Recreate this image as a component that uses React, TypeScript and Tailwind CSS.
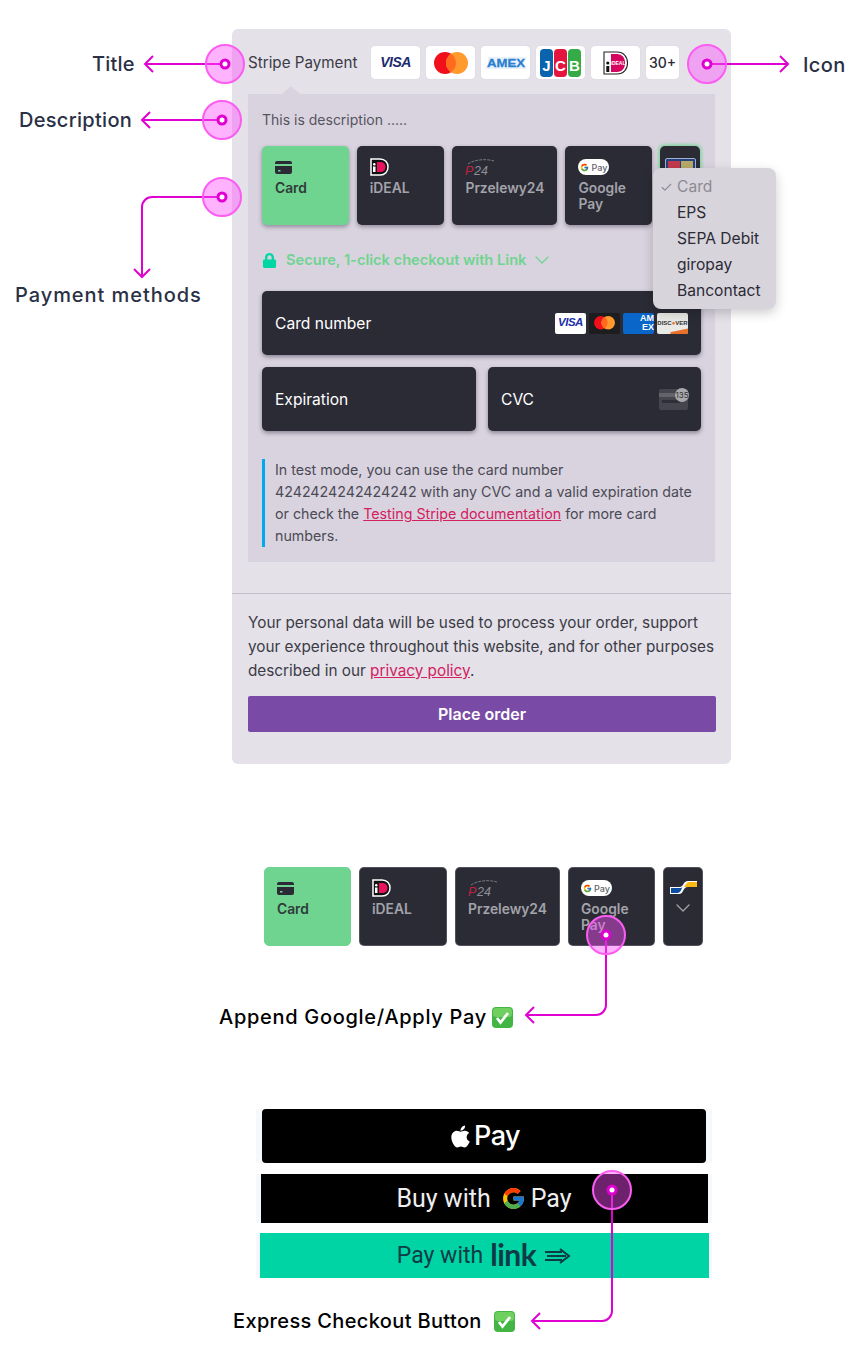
import React from "react"
import { Check, ChevronDown } from "lucide-react"
import { FaApple, FaLock } from "react-icons/fa"
import { FcGoogle } from "react-icons/fc"

const sans = "font-['Inter',sans-serif]"

function VisaMark({ size = "text-[14px]", color = "text-[#1a2b6d]" }: { size?: string; color?: string }) {
  return <span className={`font-['Liberation_Sans',sans-serif] font-bold italic tracking-[-0.5px] ${size} ${color}`}>VISA</span>
}

function McMark({ w = 34 }: { w?: number }) {
  return (
    <svg width={w} height={(w * 22) / 34} viewBox="0 0 34 22">
      <circle cx="11" cy="11" r="11" fill="#f00f1a" />
      <circle cx="23" cy="11" r="11" fill="#ff9a2e" />
      <path d="M17 1.800a11 11 0 0 1 0 18.400a11 11 0 0 1 0-18.400z" fill="#ff6a1f" />
    </svg>
  )
}

// tab version: white outline with the black body and the pink D
function IdealTabMark() {
  return (
    <svg width="19" height="18" viewBox="0 0 19 18">
      <path d="M1 1h9c5 0 8 3.500 8 8s-3 8-8 8H1z" fill="#111" stroke="#fff" strokeWidth="1.500" />
      <rect x="3" y="5" width="2.500" height="2.500" rx="1.200" fill="#fff" />
      <rect x="3" y="8.500" width="2.500" height="5.500" fill="#fff" />
      <path d="M7 4h3c3.500 0 5.500 2 5.500 5s-2 5-5.500 5H7z" fill="#e8125f" />
    </svg>
  )
}

function IdealBadgeMark() {
  return (
    <svg width="26" height="24" viewBox="0 0 26 24">
      <path d="M1 1h13c6.500 0 10.500 4.500 10.500 11S20.500 23 14 23H1z" fill="#fff" stroke="#222" strokeWidth="1.100" />
      <circle cx="4.800" cy="12" r="1.600" fill="#111" />
      <rect x="3.300" y="15" width="3" height="6" fill="#111" />
      <path d="M8 3h6c5 0 8 3.500 8 9s-3 9-8 9H8z" fill="#d5045f" />
      <text x="15" y="14" textAnchor="middle" fontSize="5" fontWeight="700" fontFamily="Liberation Sans, sans-serif" fill="#fff">iDEAL</text>
    </svg>
  )
}

function AmexMark() {
  return (
    <svg width="42" height="12" viewBox="0 0 42 12">
      <path d="M3 0h39l-3 6 3 6H0l3-6z" fill="#e9f2fb" />
      <text x="21" y="10" textAnchor="middle" fontSize="11" fontWeight="700" fontFamily="Liberation Sans, sans-serif" textLength="38" lengthAdjust="spacingAndGlyphs" fill="#2a7fd0" stroke="#2a7fd0" strokeWidth="0.300">AMEX</text>
    </svg>
  )
}

function Badge({ className = "w-[49px]", children }: { className?: string; children: React.ReactNode }) {
  return <div className={`flex h-[33px] items-center justify-center rounded-[4px] bg-white shadow-[0_0_1px_rgba(0,0,0,0.15)] ${className}`}>{children}</div>
}

function JcbMark() {
  return (
    <div className="flex h-[28px] w-[41px] gap-[1px] font-['Liberation_Sans',sans-serif]">
      <div className="flex w-[13px] items-end justify-center rounded-[4px] bg-[#0a63ad] pb-[4px] text-[15px] font-bold leading-none text-white">J</div>
      <div className="flex w-[13px] items-end justify-center rounded-[4px] bg-[#e4163f] pb-[4px] text-[15px] font-bold leading-none text-white">C</div>
      <div className="flex w-[13px] items-end justify-center rounded-[4px] bg-[#35ab48] pb-[4px] text-[15px] font-bold leading-none text-white">B</div>
    </div>
  )
}

function CardIcon() {
  return (
    <svg width="17" height="13" viewBox="0 0 17 13">
      <path d="M2 0h13a2 2 0 0 1 2 2v1H0V2a2 2 0 0 1 2-2z" fill="#2b2b36" />
      <path d="M0 5h17v6a2 2 0 0 1-2 2H2a2 2 0 0 1-2-2z" fill="#2b2b36" />
      <rect x="3" y="9" width="2.500" height="1.500" fill="#6fd490" />
    </svg>
  )
}

function P24Mark() {
  return (
    <svg width="30" height="19" viewBox="0 0 30 19">
      <path d="M3 6C9 1.500 21 .5 29 3" fill="none" stroke="#8a8a92" strokeWidth="0.800" strokeDasharray="3 1" />
      <text x="0" y="17" fontSize="12.500" fontStyle="italic" fontFamily="Liberation Sans, sans-serif" fill="#c0233c">P</text>
      <text x="9" y="17" fontSize="12.500" fontStyle="italic" fontFamily="Liberation Sans, sans-serif" fill="#8f8f96">24</text>
    </svg>
  )
}

function GPayChip() {
  return (
    <div className="flex h-[16px] w-[31px] items-center justify-center gap-[2px] rounded-full bg-white">
      <FcGoogle className="size-[9px]" />
      <span className="text-[9px] font-medium leading-none text-[#5f6368]">Pay</span>
    </div>
  )
}

function Tab({ className, active, flat, children, label }: { className: string; active?: boolean; flat?: boolean; children: React.ReactNode; label: React.ReactNode }) {
  const edge = flat
    ? `border px-[12px] pt-[12px] ${active ? "border-[#6fd490]" : "border-[#8d8d94]/40"}`
    : "px-[13px] pt-[13px] shadow-[0_2px_4px_rgba(40,30,60,0.4)]"
  return (
    <div className={`flex h-[79px] flex-col rounded-[5px] ${edge} ${active ? "bg-[#6fd490] text-[#2f3a3a]" : "bg-[#2b2b36] text-[#a3a3aa]"} ${className}`}>
      <div className="flex h-[16px] items-center">{children}</div>
      <div className="mt-[5px] text-[13.800px] font-semibold leading-[16px]">{label}</div>
    </div>
  )
}

function MethodTabs({ last, flat }: { last: React.ReactNode; flat?: boolean }) {
  return (
    <div className="flex gap-2">
      <Tab className="w-[87px]" flat={flat} active label="Card"><CardIcon /></Tab>
      <Tab className="w-[88px]" flat={flat} label="iDEAL"><IdealTabMark /></Tab>
      <Tab className="w-[105px]" flat={flat} label="Przelewy24"><P24Mark /></Tab>
      <Tab className="w-[87px]" flat={flat} label={<>Google<br />Pay</>}><GPayChip /></Tab>
      {last}
    </div>
  )
}

function Field({ className, label, children }: { className: string; label: string; children?: React.ReactNode }) {
  return (
    <div className={`flex h-[64px] items-center justify-between rounded-[5px] bg-[#2b2b36] pl-[13px] pr-[13px] text-[15.600px] text-white shadow-[0_2px_4px_rgba(40,30,60,0.45)] ${className}`}>
      <span className="pt-[1px]">{label}</span>
      {children}
    </div>
  )
}

function MiniCard({ className, children }: { className: string; children?: React.ReactNode }) {
  return <div className={`relative flex h-[21px] w-[31px] items-center justify-center overflow-hidden rounded-[2px] ${className}`}>{children}</div>
}

function CvcIcon() {
  return (
    <div className="relative h-[21px] w-[29px]">
      <div className="h-full w-full rounded-[2px] bg-[#45454f] pt-[4px]">
        <div className="h-[4px] bg-[#63636b]" />
        <div className="ml-[3px] mt-[3px] h-[3px] w-[18px] bg-[#2f2f39]" />
      </div>
      <div className="absolute -right-[1px] -top-[1px] flex size-[14px] items-center justify-center rounded-full bg-[#a9a9ad] text-[8px] leading-none text-[#333]">135</div>
    </div>
  )
}

function StripeCard() {
  return (
    <div className={`ml-[232px] mt-[29px] h-[735px] w-[499px] rounded-[6px] bg-[#e4e1e9] ${sans}`}>
      <div className="flex items-center pl-[16px] pt-[17px]">
        <span className="w-[123px] text-[15.200px] leading-[33px] text-[#3b3b45]">Stripe Payment</span>
        <div className="flex gap-[6px]">
          <Badge><VisaMark /></Badge>
          <Badge><McMark /></Badge>
          <Badge><AmexMark /></Badge>
          <Badge><JcbMark /></Badge>
          <Badge><IdealBadgeMark /></Badge>
          <Badge className="w-[33px]"><span className="text-[14px] font-medium text-[#2b2b36]">30+</span></Badge>
        </div>
      </div>
      <div className="relative mx-[16px] mt-[15px] h-[468px] bg-[#d9d3df] pl-[14px] pr-[15px] pt-[17px]">
        <div className="absolute -top-[8px] left-[34px] size-0 border-x-[9px] border-b-[8px] border-x-transparent border-b-[#d9d3df]" />
        <p className="text-[14px] leading-[18px] text-[#55535e]">This is description .....</p>
        <div className="mt-[17px]">
          <MethodTabs
            last={
              <div className="h-[79px] w-[40px] rounded-[5px] bg-[#2b2b36] pl-[5px] pt-[12px] shadow-[0_0_3px_2px_rgba(111,212,144,0.7)]">
                <div className="flex h-[18px] w-[31px] gap-[1px] rounded-[2px] border border-[#9fb0d0] bg-[#22417d] p-[2px]">
                  <div className="w-[13px] bg-[#c23a4d]" />
                  <div className="w-[13px] bg-[#b9a866]" />
                </div>
              </div>
            }
          />
        </div>
        <div className="mt-[25px] flex h-[20px] items-center text-[14.650px] font-semibold leading-[20px] text-[#6fd490]">
          <FaLock className="size-[15px] text-[#00d6a3]" />
          <span className="ml-[9px]">Secure, 1-click checkout with Link</span>
          <ChevronDown className="ml-[4px] size-[24px]" strokeWidth={1.300} />
        </div>
        <Field className="mt-[21px] w-[439px]" label="Card number">
          <div className="flex gap-[3px]">
            <MiniCard className="bg-white"><VisaMark size="text-[11.500px]" color="text-[#1c2fa8]" /></MiniCard>
            <MiniCard className="bg-[#1d1d20]"><McMark w={21} /></MiniCard>
            <MiniCard className="justify-end bg-[#0a66c8]">
              <span className="text-right font-['Liberation_Sans',sans-serif] text-[9px] font-bold leading-[9px] text-white">AM<br />EX</span>
            </MiniCard>
            <MiniCard className="bg-[#e9e9e6]">
              <span className="font-['Liberation_Sans',sans-serif] text-[6px] font-bold text-[#333]">DISC<span className="text-[#e8702a]">●</span>VER</span>
              <div className="absolute -bottom-[5px] -right-[3px] h-[9px] w-[20px] -rotate-[12deg] bg-[#e8702a]" />
            </MiniCard>
          </div>
        </Field>
        <div className="mt-[12px] flex w-[439px] gap-[12px]">
          <Field className="w-[214px]" label="Expiration" />
          <Field className="w-[213px]" label="CVC"><CvcIcon /></Field>
        </div>
        <div className="mt-[28px] w-[439px] border-l-[3px] border-[#00a8f0] pl-[10px] text-[14.250px] leading-[22px] text-[#4b4a55]">
          In test mode, you can use the card number 4242424242424242 with any CVC and a valid expiration date or check the{" "}
          <span className="text-[#d3205f] underline">Testing Stripe documentation</span> for more card numbers.
        </div>
      </div>
      <div className="mt-[31px] border-t border-[#c4c0ca] px-[16px] pt-[17px]">
        <p className="text-[15.300px] leading-[24px] text-[#3b3b45]">
          Your personal data will be used to process your order, support your experience throughout this website, and for other purposes described in our{" "}
          <span className="text-[#d3205f] underline">privacy policy</span>.
        </p>
        <button className={`mt-[13px] h-[36px] w-[468px] rounded-[2px] bg-[#7a4ba6] text-[16px] font-semibold text-white ${sans}`}>Place order</button>
      </div>
    </div>
  )
}

function MethodDropdown() {
  return (
    <div className={`absolute left-[653px] top-[168px] h-[141px] w-[123px] rounded-[8px] bg-[#d8d4db] py-[6px] pl-[24px] text-[15.600px] leading-[26px] text-[#2b2b36] shadow-[0_4px_12px_rgba(0,0,0,0.2)] ${sans}`}>
      <div className="relative text-[#8c8a94]">
        <Check className="absolute -left-[17px] top-[7px] size-[13px]" strokeWidth={2} />
        Card
      </div>
      <div>EPS</div>
      <div>SEPA Debit</div>
      <div>giropay</div>
      <div>Bancontact</div>
    </div>
  )
}

function AppendedTabs() {
  return (
    <div className={`ml-[264px] mt-[103px] ${sans}`}>
      <MethodTabs
        flat
        last={
          <div className="flex h-[79px] w-[40px] flex-col items-center rounded-[5px] border border-[#8d8d94]/40 bg-[#2b2b36] pt-[13px] text-[#a3a3aa]">
            <svg width="27" height="13" viewBox="0 0 27 13">
              <path d="M0 6h9c3 0 4-2 5-4 1-1 2-2 4-2h9v6h-9c-3 0-4 2-5 4-1 2-2 3-4 3H0z" fill="#fff" />
              <path d="M14 6c2-3 3-5 5-5h8v5z" fill="#fdb913" />
              <path d="M1 7h9c1 0 2-.5 2.500-1-1 2-2 6-5 6H1z" fill="#0b4ea2" />
            </svg>
            <ChevronDown className="mt-[2px] size-[24px]" strokeWidth={1.300} />
          </div>
        }
      />
    </div>
  )
}

function ExpressButtons() {
  return (
    <div className="ml-[256px] mt-[163px] flex w-[456px] flex-col font-['Roboto',sans-serif] text-white">
      <div className="flex justify-center bg-[#f6f9fc]">
        <div className="flex h-[54px] w-[444px] items-center justify-center gap-[1px] rounded-[4px] bg-black">
          <FaApple className="size-[25px]" />
          <span className="font-['Inter',sans-serif] text-[27px] font-medium tracking-[-0.5px]">Pay</span>
        </div>
      </div>
      <div className="mt-[11px] flex justify-center bg-[#f6f9fc]">
        <div className="flex h-[49px] w-[447px] items-center justify-center bg-black text-[25px] text-[#eee]">
          <span>Buy with</span>
          <FcGoogle className="ml-[10px] size-[25px]" />
          <span className="ml-[5px]">Pay</span>
        </div>
      </div>
      <div className="mt-[10px] flex justify-center bg-[#f6f9fc]">
        <div className="flex h-[45px] w-[449px] items-center justify-center bg-[#00d4a4] text-[23px] text-[#0e3b46]">
          <span className="pt-[1px]">Pay with</span>
          <span className="-mt-[4px] ml-[7px] font-['Lato',sans-serif] text-[30px] font-bold leading-none tracking-[-0.5px]">link</span>
          <svg className="ml-[9px]" width="26" height="18" viewBox="0 0 26 18" fill="none" stroke="#0e3b46" strokeWidth="2">
            <path d="M0 5h17M2 9h19M0 13h17M15 2l9 7-9 7" />
          </svg>
        </div>
      </div>
    </div>
  )
}

function Hotspot({ x, y }: { x: number; y: number }) {
  return (
    <g>
      <circle cx={x} cy={y} r="19" fill="#ff4fff" fillOpacity="0.43" stroke="#fb5cf2" strokeWidth="2" />
      <circle cx={x} cy={y} r="4" fill="#fff" stroke="#e000d2" strokeWidth="3" />
    </g>
  )
}

// the pointers and their labels sit over the page
function Annotations() {
  const paths = [
    "M225 64H145M153 56l-8 8 8 8",
    "M222 120H142M150 112l-8 8 8 8",
    "M222 197H152a10 10 0 0 0-10 10V277M134 269l8 8 8-8",
    "M707 64H788M780 56l8 8-8 8",
    "M606 935V1005a10 10 0 0 1-10 10H526M534 1007l-8 8 8 8",
    "M612 1190V1311a10 10 0 0 1-10 10H532M540 1313l-8 8 8 8",
  ]
  const spots = [[225, 64], [222, 120], [222, 197], [707, 64], [606, 935], [612, 1190]]
  return (
    <svg className="pointer-events-none absolute inset-0" width="862" height="1347" fill="none">
      {paths.map((d) => (
        <path key={d} d={d} stroke="#e000d2" strokeWidth="2" />
      ))}
      {spots.map(([x, y]) => (
        <Hotspot key={`${x}-${y}`} x={x} y={y} />
      ))}
    </svg>
  )
}

function Label({ className, children }: { className: string; children: React.ReactNode }) {
  return <div className={`absolute flex items-center whitespace-nowrap font-['Inter',sans-serif] text-[20px] font-medium leading-[28px] ${className}`}>{children}</div>
}

function CheckEmoji({ className }: { className: string }) {
  return (
    <svg className={className} width="21" height="21" viewBox="0 0 21 21">
      <rect width="21" height="21" rx="4" fill="#42b545" />
      <rect x="1" y="1" width="19" height="9" rx="3" fill="#6fd060" />
      <path d="M5 11l3.500 4.500 7.500-9.500" fill="none" stroke="#fff" strokeWidth="2.800" />
    </svg>
  )
}

export default function App() {
  return (
    <div className="relative h-[1347px] w-[862px] overflow-hidden bg-white">
      <StripeCard />
      <AppendedTabs />
      <ExpressButtons />
      <MethodDropdown />
      <Annotations />
      <Label className="left-[92px] top-[50px] tracking-[0.2px] text-[#2a3045]">Title</Label>
      <Label className="left-[19px] top-[106px] tracking-[0.3px] text-[#2a3045]">Description</Label>
      <Label className="left-[15px] top-[281px] tracking-[0.95px] text-[#2a3045]">Payment methods</Label>
      <Label className="left-[803px] top-[51px] tracking-[0.4px] text-[#2a3045]">Icon</Label>
      <Label className="left-[219px] top-[1003px] tracking-[0.7px] text-black">Append Google/Apply Pay<CheckEmoji className="ml-[5px]" /></Label>
      <Label className="left-[233px] top-[1307px] tracking-[0.35px] text-black">Express Checkout Button<CheckEmoji className="ml-[12px]" /></Label>
    </div>
  )
}
